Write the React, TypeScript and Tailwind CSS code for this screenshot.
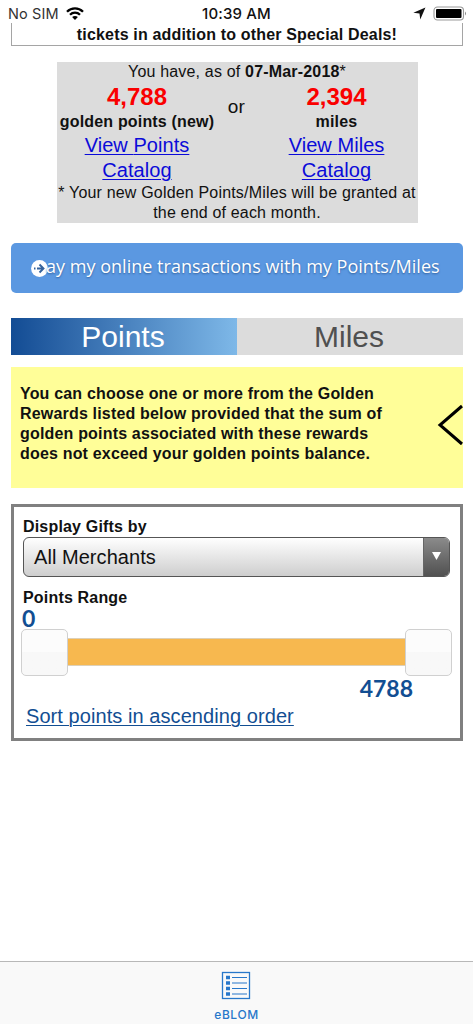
import type { ReactNode } from 'react';

function StatusBar() {
  return (
    <header className="grid h-[23px] shrink-0 grid-cols-3 items-center pt-[4px] font-['Inter',sans-serif] text-[15px] leading-[18px]">
      <div className="flex items-center gap-[7px] pl-[8px] whitespace-nowrap">
        <span className="text-[14.5px] tracking-[0.1px] text-[#333]">No SIM</span>
        <svg width="18" height="13" viewBox="0 0 18 13" className="shrink-0" fill="none" stroke="#000" strokeWidth="2.3">
          <path d="M1 4.8C5.5.3 12.500.3 17 4.800" />
          <path d="M4 7.800C6.800 5 11.200 5 14 7.800" />
          <path d="M6.100 10.100C7.600 8.600 10.400 8.600 11.900 10.100L9 12.900Z" fill="#000" stroke="none" />
        </svg>
      </div>
      <span className="text-center font-medium tracking-[0.15px] whitespace-nowrap">10:39 AM</span>
      <div className="flex items-center justify-end gap-[7px] pr-[6px]">
        <svg width="13" height="13" viewBox="0 0 12 12">
          <path d="M11.500.5L6.700 11.500L6 6L.3 5.300Z" fill="#111" />
        </svg>
        <svg width="34" height="15" viewBox="0 0 34 15">
          <rect x="1" y="1" width="29.500" height="13" rx="3.500" fill="#fff" stroke="#999" strokeWidth="1.100" />
          <rect x="3" y="3" width="25.500" height="9" rx="1" fill="#000" />
          <path d="M32 5.500Q34 7.500 32 9.500Z" fill="#888" />
        </svg>
      </div>
    </header>
  );
}

function CatalogLink({ kind }: { kind: string }) {
  return (
    <a href="#catalog" className="text-[20px] leading-[25px] tracking-[0.05px] text-[#0b0bd9] underline decoration-1 underline-offset-2">
      View {kind}
      <br />
      Catalog
    </a>
  );
}

function Balance({ amount, unit, children }: { amount: string; unit: string; children: ReactNode }) {
  return (
    <div className="flex flex-col items-center text-center whitespace-nowrap">
      <strong className="text-[24px] leading-[29px] tracking-[0px] text-[#fa0000]">{amount}</strong>
      <strong className="text-[16px] leading-[22px]">{unit}</strong>
      {children}
    </div>
  );
}

function BalancePanel() {
  return (
    <section className="mx-auto mt-[16px] h-[161px] w-[361px] shrink-0 bg-[#dcdcdc] text-center text-[16px] leading-[20px] tracking-[0.18px]">
      <p>
        You have, as of <b>07-Mar-2018</b>*
      </p>
      <div className="grid h-[101px] grid-cols-[161px_38px_162px]">
        <Balance amount="4,788" unit="golden points (new)">
          <CatalogLink kind="Points" />
        </Balance>
        <span className="pt-[15px] text-[19px]">or</span>
        <Balance amount="2,394" unit="miles">
          <CatalogLink kind="Miles" />
        </Balance>
      </div>
      <p className="whitespace-nowrap">
        * Your new Golden Points/Miles will be granted at
        <br />
        the end of each month.
      </p>
    </section>
  );
}

function PayButton() {
  return (
    <button className="mt-[20px] flex h-[50px] shrink-0 items-center rounded-[5px] bg-[#5b98e1] pl-[20px] pb-[4px] font-['Open_Sans',sans-serif] text-[18px] whitespace-nowrap text-white [text-shadow:0_1px_2px_#315f9c]">
      <svg width="17" height="17" viewBox="0 0 17 17" className="mt-[4px] shrink-0">
        <circle cx="8.500" cy="8.500" r="8.400" fill="#fff" />
        <path d="M3 8.500H4.500M6 8.500H12M8.500 4.500L12.500 8.500L8.500 12.500" fill="none" stroke="#35639d" strokeWidth="1.900" />
      </svg>
      <span className="-ml-[2px] tracking-[0.02px]">ay my online transactions with my Points/Miles</span>
    </button>
  );
}

function Tabs() {
  return (
    <div className="mt-[25px] grid h-[37px] shrink-0 grid-cols-2 text-[30px] leading-[36px]">
      <button className="bg-linear-to-r from-[#124c94] to-[#7eb8e8] pr-[2px] text-white">Points</button>
      <button className="bg-[#dcdcdc] pr-[2px] text-[#505050]">Miles</button>
    </div>
  );
}

function Notice() {
  return (
    <section className="mt-[12px] flex h-[121px] shrink-0 justify-between bg-[#fffe98] pt-[17px] pl-[9px]">
      <p className="text-[16px] leading-[20px] font-bold tracking-[0.18px] whitespace-nowrap">
        You can choose one or more from the Golden
        <br />
        Rewards listed below provided that the sum of
        <br />
        golden points associated with these rewards
        <br />
        does not exceed your golden points balance.
      </p>
      <svg width="26" height="42" viewBox="0 0 26 42" className="mt-[20px] shrink-0">
        <path d="M25 2L3 21L25 40" fill="none" stroke="#000" strokeWidth="3" />
      </svg>
    </section>
  );
}

function SliderThumb() {
  return <div className="h-[47px] w-[47px] shrink-0 rounded-[5px] border border-[#d0d0d0] bg-linear-to-b from-[#fcfcfc] from-50% to-[#f8f8f8] to-50%" />;
}

function GiftFilter() {
  return (
    <section className="mt-[16px] h-[237px] shrink-0 border-[3px] border-[#808080] px-[9px] pt-[9px]">
      <div className="text-[16px] leading-[21px] font-bold tracking-[0.18px]">Display Gifts by</div>
      <div className="flex h-[40px] w-[427px] overflow-hidden rounded-[6px] border border-[#555] bg-linear-to-b from-white to-[#cecece]">
        <span className="flex-1 pl-[10px] text-[20px] leading-[38px] tracking-[0.05px]">All Merchants</span>
        <span className="flex w-[26px] items-center justify-center border-l border-[#666] bg-linear-to-b from-[#8b8b8b] to-[#515151] pb-[3px]">
          <svg width="9" height="8" viewBox="0 0 9 8">
            <path d="M0 0H9L4.500 8Z" fill="#fff" />
          </svg>
        </span>
      </div>
      <div className="mt-[10px] pt-[1px] text-[16px] leading-[19px] font-bold tracking-[0.18px]">Points Range</div>
      <div className="-ml-px h-[22px] font-['Lato',sans-serif] text-[23px] leading-[23px] font-bold text-[#124e92]">0</div>
      <div className="-ml-[2px] flex w-[431px] items-center">
        <SliderThumb />
        <div className="-mt-[1px] h-[28px] flex-1 border-y border-[#ddd0b8] bg-[#f7b84f]" />
        <SliderThumb />
      </div>
      <div className="h-[28px] pr-[38px] text-right font-['Lato',sans-serif] text-[23px] leading-[25px] font-bold text-[#124e92]">4788</div>
      <a href="#sort" className="ml-[3px] block text-[20px] leading-[25px] tracking-[0.07px] whitespace-nowrap text-[#124e92] underline decoration-1 underline-offset-2">
        Sort points in ascending order
      </a>
    </section>
  );
}

function BottomBar() {
  return (
    <nav className="flex h-[63px] shrink-0 flex-col items-center border-t border-[#b8b8b8] bg-[#f9f9f9] pt-[9px] text-[#2777ca]">
      <svg width="30" height="29" viewBox="0 0 30 29" fill="none" stroke="currentColor" className="mr-px">
        <rect x="1.500" y="1.500" width="27" height="26" strokeWidth="1.300" />
        <path d="M5 6.500H9M5 12H9M5 17.500H9M5 23H9" strokeWidth="3.400" />
        <path d="M11 6.500H26M11 12H26M11 17.500H26M11 23H26" strokeWidth="1.200" />
      </svg>
      <span className="mt-[7px] font-['Inter',sans-serif] text-[12px] leading-[16px] font-medium tracking-[0.6px]">eBLOM</span>
    </nav>
  );
}

export default function App() {
  return (
    <div className="flex h-[1024px] w-[473px] flex-col overflow-hidden bg-white font-['Liberation_Sans',Arial,sans-serif] text-[#111]">
      <StatusBar />
      <main className="flex flex-1 flex-col pr-[10px] pl-[11px]">
        <div className="h-[23px] shrink-0 border border-t-0 border-[#a5a5a5] pt-px text-center text-[16px] leading-[21px] font-bold tracking-[0.17px]">
          tickets in addition to other Special Deals!
        </div>
        <BalancePanel />
        <PayButton />
        <Tabs />
        <Notice />
        <GiftFilter />
      </main>
      <BottomBar />
    </div>
  );
}
